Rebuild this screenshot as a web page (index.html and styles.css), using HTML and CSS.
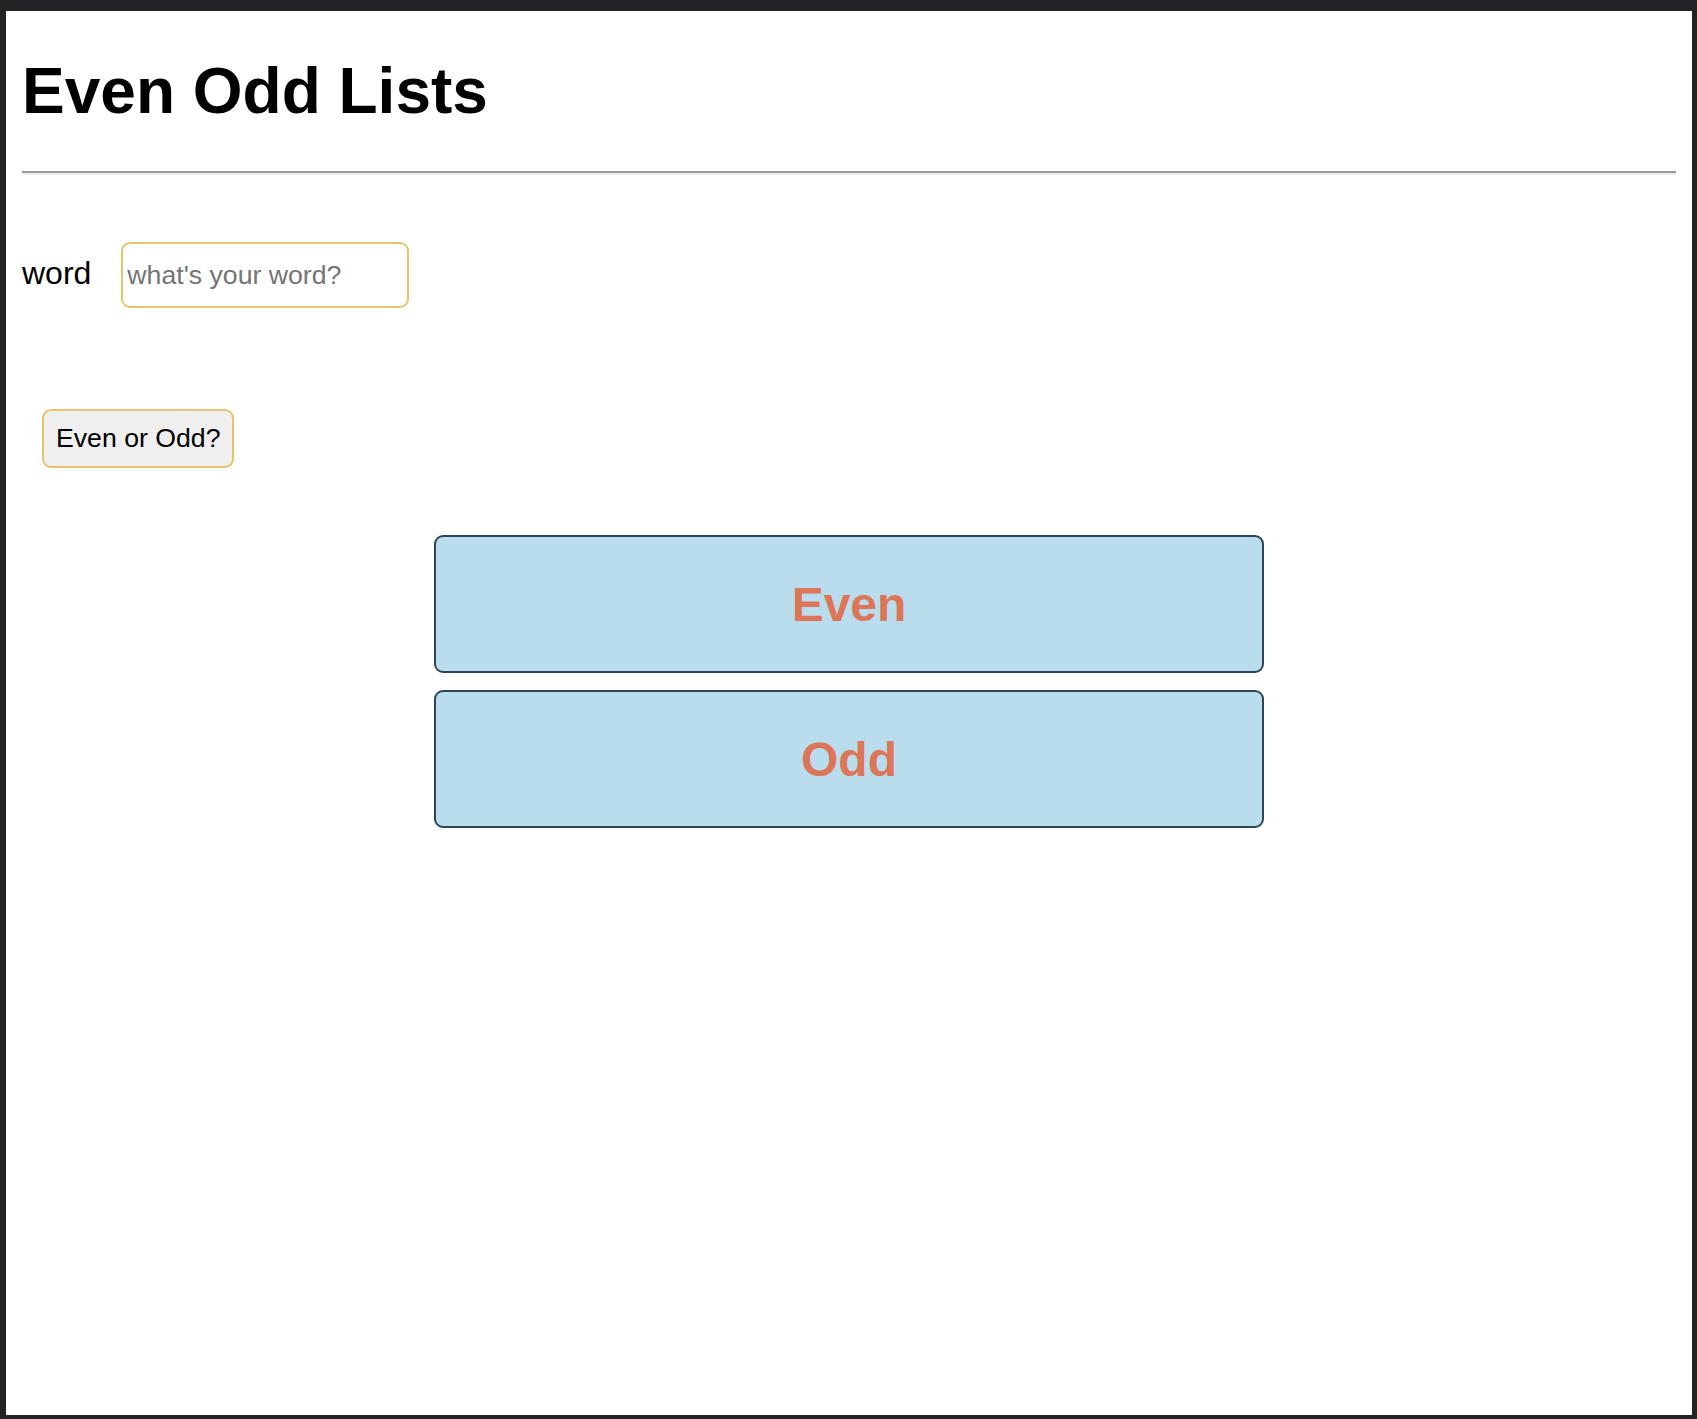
FILE: index.html
```html
<!DOCTYPE html>
<html lang="en">
<head>
<meta charset="utf-8">
<title>Even Odd Lists</title>
<link rel="stylesheet" href="styles.css">
</head>
<body>
  <div class="window">
    <h1 class="title">Even Odd Lists</h1>
    <hr class="rule">
    <div class="word-row">
      <label class="word-label" for="word">word</label>
      <input class="word-input" id="word" type="text" placeholder="what's your word?">
    </div>
    <div class="action-row">
      <button class="check-btn" type="button">Even or Odd?</button>
    </div>
    <div class="lists">
      <div class="list-box"><span class="list-title">Even</span></div>
      <div class="list-box"><span class="list-title">Odd</span></div>
    </div>
  </div>
</body>
</html>
```

FILE: styles.css
```css
html {
  background: #232326;
}
body {
  margin: 0;
  padding: 11px 5px 4px 6px;
  font-family: "Liberation Sans", Arial, sans-serif;
  color: #000;
}
.window {
  background: #fff;
  height: calc(100vh - 15px);
  box-sizing: border-box;
  padding: 0 16px;
  overflow: hidden;
  display: flex;
  flex-direction: column;
}
.title {
  margin: 43px 0 0;
  font-size: 64px;
  line-height: 74px;
  font-weight: bold;
}
.rule {
  margin: 43px 0 0;
  height: 0;
  border: 0;
  border-top: 2px solid #9a9a9a;
  border-bottom: 2px solid #ececec;
  width: 100%;
  box-sizing: border-box;
}
.word-row {
  margin-top: 67px;
  display: flex;
  align-items: baseline;
}
.word-label {
  font-size: 32px;
  line-height: 37px;
  margin-right: 30px;
}
.word-input {
  box-sizing: border-box;
  width: 288px;
  height: 66px;
  border: 2px solid #e6c46c;
  border-radius: 9px;
  padding: 0 4px;
  font-family: "Liberation Sans", Arial, sans-serif;
  font-size: 26.67px;
  color: #000;
  outline: none;
  margin: 0;
}
.word-input::placeholder {
  color: #757575;
}
.action-row {
  margin-top: 101px;
  display: flex;
}
.check-btn {
  margin: 0 0 0 20px;
  box-sizing: border-box;
  height: 59px;
  padding: 0 12px;
  background: #efefef;
  border: 2px solid #e6c46c;
  border-radius: 9px;
  font-family: "Liberation Sans", Arial, sans-serif;
  font-size: 26.67px;
  color: #000;
}
.lists {
  margin-top: 67px;
  display: flex;
  flex-direction: column;
  align-items: center;
  gap: 17px;
}
.list-box {
  box-sizing: border-box;
  width: 830px;
  height: 138px;
  background: #badded;
  border: 2px solid #2c4656;
  border-radius: 9px;
  display: flex;
  align-items: center;
  justify-content: center;
}
.list-title {
  font-size: 48px;
  font-weight: bold;
  color: #dd7658;
  line-height: 55px;
}
```
